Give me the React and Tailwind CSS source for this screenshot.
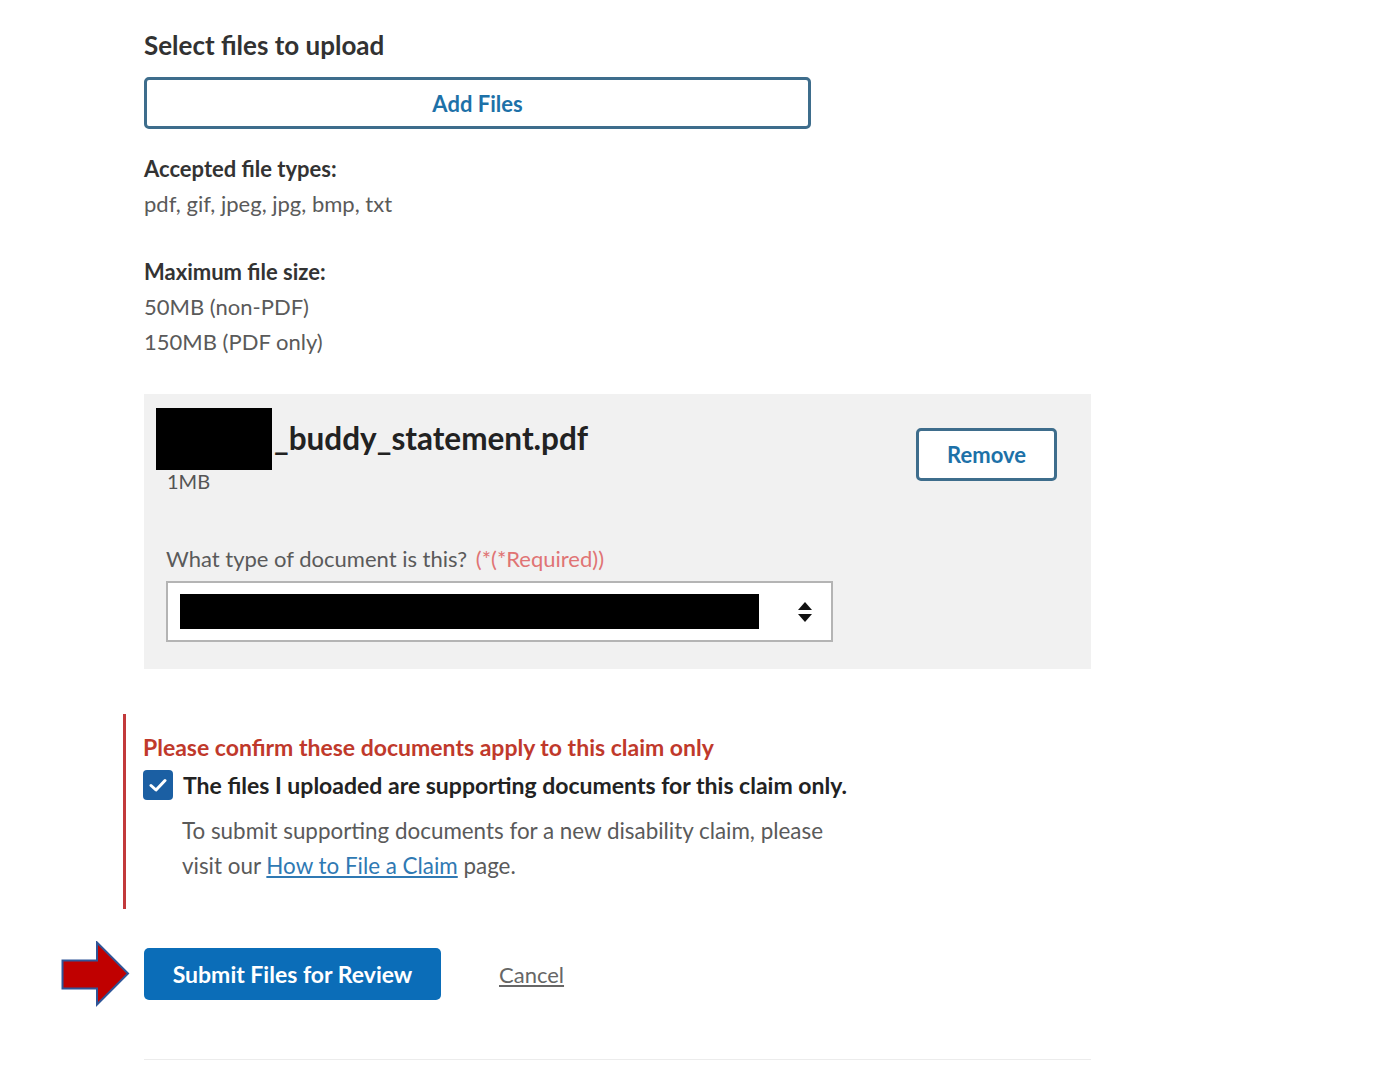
import React from 'react';

const font = { fontFamily: 'Lato, "Open Sans", sans-serif' };

const Arrow = () => (
  <svg className="absolute left-[-83px] top-[-7px]" width="69" height="66" viewBox="0 0 69 66">
    <polygon points="1.5,19.5 36,19.5 36,1.5 67,32.5 36,63.5 36,47.5 1.5,47.5" fill="#c00000" stroke="#2f5597" strokeWidth="2" />
  </svg>
);

const App = () => {
  return (
    <div className="min-h-[1092px] bg-white text-[#333]" style={font}>
      <div className="ml-[144px] w-[947px] pt-[30px]">
        <h2 className="text-[26px] leading-[30px] font-bold text-[#323232]">Select files to upload</h2>

        <button className="mt-[17px] w-[667px] h-[52px] rounded-[5px] border-[3px] border-[#3e6d8c] bg-white text-[22px] font-bold text-[#1d71a8]">
          Add Files
        </button>

        <div className="mt-[22px] text-[22px] leading-[35px]">
          <p className="font-bold text-[#333]">Accepted file types:</p>
          <p className="text-[#5a5a5a]">pdf, gif, jpeg, jpg, bmp, txt</p>
          <p className="mt-[33px] font-bold text-[#333]">Maximum file size:</p>
          <p className="text-[#5a5a5a]">50MB (non-PDF)</p>
          <p className="text-[#5a5a5a]">150MB (PDF only)</p>
        </div>

        <div className="mt-[35px] bg-[#f1f1f1] pt-[14px] pl-[12px] pr-[34px] pb-[27px]">
          <div className="flex justify-between items-start">
            <div>
              <div className="flex items-center h-[62px]">
                <div className="w-[116px] h-[62px] bg-black" />
                <span className="text-[31.5px] font-bold text-[#222] ml-[2px]">_buddy_statement.pdf</span>
              </div>
              <p className="ml-[11px] text-[20px] leading-[22px] text-[#555]">1MB</p>
            </div>
            <button className="mt-[20px] w-[141px] h-[53px] rounded-[5px] border-[3px] border-[#3e6d8c] bg-white text-[22px] font-bold text-[#1d71a8]">
              Remove
            </button>
          </div>

          <p className="mt-[52px] ml-[10px] text-[22px] leading-[30px] text-[#5a5a5a]">
            What type of document is this? <span className="ml-[3px] text-[#e07474]">(*(*Required))</span>
          </p>
          <div className="mt-[7px] ml-[10px] w-[667px] h-[61px] bg-white border-2 border-[#b4b4b4] flex items-center pl-[12px] pr-[18px]">
            <div className="w-[579px] h-[35px] bg-black" />
            <svg className="ml-auto" width="16" height="22" viewBox="0 0 16 22">
              <polygon points="8,1 15,9 1,9" fill="#111" />
              <polygon points="1,13 15,13 8,21" fill="#111" />
            </svg>
          </div>
        </div>

        <div className="mt-[45px] -ml-[21px] border-l-[3px] border-[#c2393b] pl-[17px] pt-[18px] pb-[26px]">
          <p className="text-[23px] leading-[30px] font-bold text-[#c0392b]">Please confirm these documents apply to this claim only</p>
          <div className="mt-[8px] flex items-center">
            <div className="w-[30px] h-[30px] rounded-[4px] bg-[#1b5fa3] flex items-center justify-center">
              <svg width="18" height="14" viewBox="0 0 18 14">
                <path d="M2 7.5 L7 12 L16 2.5" stroke="#fff" strokeWidth="3" fill="none" strokeLinecap="round" strokeLinejoin="round" />
              </svg>
            </div>
            <span className="ml-[10px] text-[23px] leading-[30px] font-bold text-[#222]">The files I uploaded are supporting documents for this claim only.</span>
          </div>
          <div className="mt-[13px] ml-[39px] text-[22.4px] leading-[35px] text-[#5a5a5a]">
            <p>To submit supporting documents for a new disability claim, please</p>
            <p>
              visit our <a href="#" className="text-[#2f79b3] underline">How to File a Claim</a> page.
            </p>
          </div>
        </div>

        <div className="relative mt-[39px] flex items-center">
          <Arrow />
          <button className="w-[297px] h-[52px] rounded-[5px] bg-[#0b6db8] text-[23px] font-bold text-white">Submit Files for Review</button>
          <a href="#" className="ml-[58px] text-[22px] text-[#666] underline">Cancel</a>
        </div>

        <div className="mt-[59px] h-px bg-[#ececec]" />
      </div>
    </div>
  );
};

export default App;
